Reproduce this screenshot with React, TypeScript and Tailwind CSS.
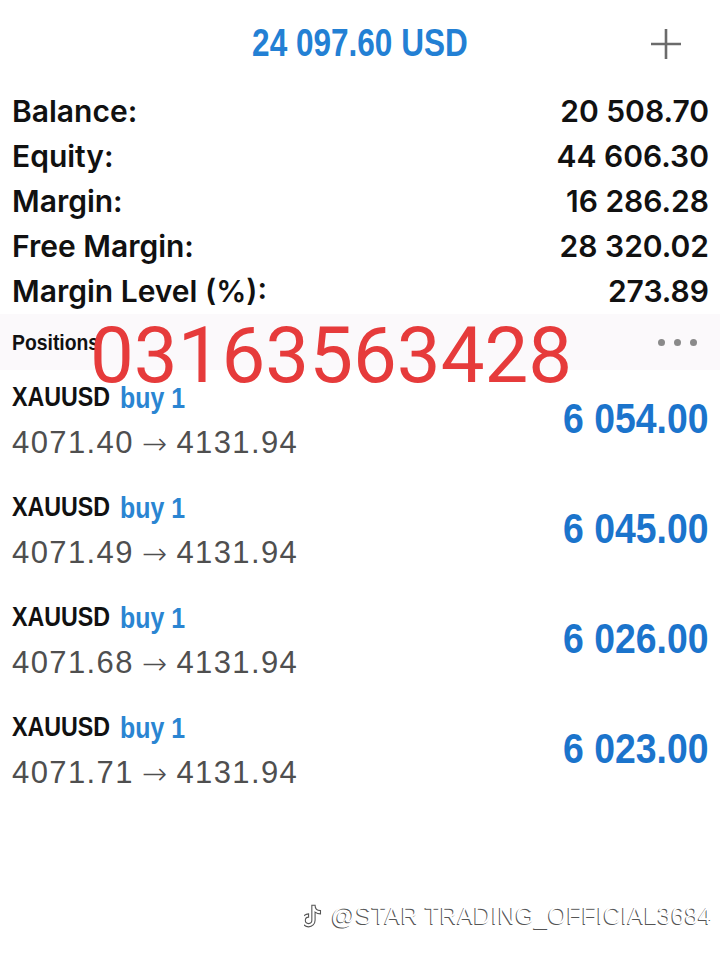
import React from 'react';

interface Position {
  symbol: string;
  side: string;
  open: string;
  current: string;
  profit: string;
}

const summary: [string, string][] = [
  ['Balance:', '20 508.70'],
  ['Equity:', '44 606.30'],
  ['Margin:', '16 286.28'],
  ['Free Margin:', '28 320.02'],
  ['Margin Level (%):', '273.89'],
];

const positions: Position[] = [
  { symbol: 'XAUUSD', side: 'buy 1', open: '4071.40', current: '4131.94', profit: '6 054.00' },
  { symbol: 'XAUUSD', side: 'buy 1', open: '4071.49', current: '4131.94', profit: '6 045.00' },
  { symbol: 'XAUUSD', side: 'buy 1', open: '4071.68', current: '4131.94', profit: '6 026.00' },
  { symbol: 'XAUUSD', side: 'buy 1', open: '4071.71', current: '4131.94', profit: '6 023.00' },
];

// condensed look: Liberation Sans bold squeezed horizontally
const narrow = "font-['Liberation_Sans',sans-serif] font-bold";

const PlusIcon = () => (
  <svg width="32" height="32" viewBox="0 0 32 32" fill="none">
    <path d="M16 1v30M1 16h30" stroke="#6b6b6b" strokeWidth="2.6" />
  </svg>
);

const LogoMark = () => (
  <svg width="20" height="26" viewBox="0 0 18 24" fill="#fff" stroke="#555" strokeWidth="1">
    <path d="M10 2c0 3 2 5 5 5v3c-2 0-3.6-.6-5-1.6V16a6 6 0 1 1-6-6v3a3 3 0 1 0 3 3V2z" />
  </svg>
);

const PositionRow: React.FC<{ p: Position }> = ({ p }) => (
  <div className="h-[110px] flex justify-between pl-3 pr-[12px]">
    <div className="pt-[7px]">
      <div className={`h-[40px] flex items-center gap-[12px] text-[28px] origin-left scale-x-[0.83] ${narrow}`}>
        <span className="text-[#111]">{p.symbol}</span>
        <span className="text-[#2a85d2] text-[30px]">{p.side}</span>
      </div>
      <div className="h-[52px] flex items-center text-[31px] tracking-[1.4px] text-[#4f4f4f] font-['Liberation_Sans',sans-serif]">
        {p.open}
        <span className="mx-[8px] font-['DejaVu_Sans',sans-serif] text-[30px] font-light">→</span>
        {p.current}
      </div>
    </div>
    <div className={`mt-[23px] h-[50px] flex items-center text-[42px] text-[#1b74cc] origin-right scale-x-[0.89] ${narrow}`}>
      {p.profit}
    </div>
  </div>
);

export default function App() {
  return (
    <div className="relative w-[720px] h-[960px] bg-white overflow-hidden">
      <div className="h-[89px] grid grid-cols-[1fr_auto_1fr] items-center pb-[2px]">
        <div />
        <div className={`text-[38px] text-[#2380d4] scale-x-[0.83] ${narrow}`}>24 097.60 USD</div>
        <div className="flex justify-end pr-[38px]">
          <PlusIcon />
        </div>
      </div>

      <div className="font-['Inter',sans-serif] font-semibold text-[30px] text-[#111]">
        {summary.map(([label, value]) => (
          <div key={label} className="h-[45px] flex items-center justify-between pl-3 pr-[11px]">
            <span>{label}</span>
            <span>{value}</span>
          </div>
        ))}
      </div>

      <div className="h-[56px] bg-[#fbf9fb] flex items-center justify-between pl-3 pr-[23px]">
        <span className={`text-[22px] text-[#111] origin-left scale-x-[0.88] ${narrow}`}>Positions</span>
        <div className="flex gap-[9px]">
          <span className="w-[7px] h-[7px] rounded-full bg-[#8a8a8a]" />
          <span className="w-[7px] h-[7px] rounded-full bg-[#8a8a8a]" />
          <span className="w-[7px] h-[7px] rounded-full bg-[#8a8a8a]" />
        </div>
      </div>

      <div>
        {positions.map((p, i) => (
          <PositionRow key={i} p={p} />
        ))}
      </div>

      <div className="absolute left-[90px] top-[317px] text-[78px] leading-none text-[#e63b3b] font-['Roboto',sans-serif]">
        03163563428
      </div>

      <div className="absolute left-[304px] top-[898px] flex items-center gap-[7px]">
        <LogoMark />
        <span className="text-[24px] tracking-[0.2px] text-white font-['Liberation_Sans',sans-serif] [text-shadow:-1px_1px_0_#555]">
          @STAR TRADING_OFFICIAL3684
        </span>
      </div>
    </div>
  );
}
